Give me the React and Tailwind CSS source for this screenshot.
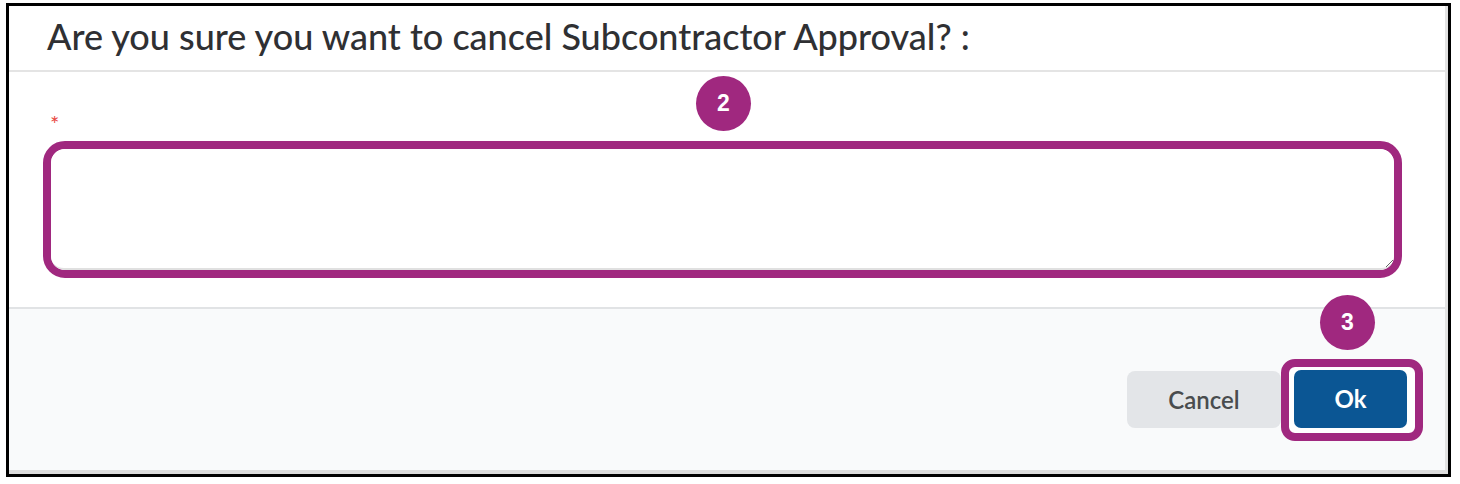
import React from 'react'

const Badge = ({ n, className }) => (
  <div
    className={
      'absolute z-10 w-[55px] h-[55px] rounded-full bg-[#a0287f] text-white flex items-center justify-center text-[23px] font-bold ' +
      className
    }
    style={{ fontFamily: '"Liberation Sans", Arial, sans-serif' }}
  >
    {n}
  </div>
)

const App = () => {
  return (
    <div className="w-[1460px] h-[484px] bg-white pt-[3px] pl-[6px]" style={{ fontFamily: 'Lato, "Open Sans", sans-serif' }}>
      <div className="w-[1445px] h-[474px] border-[3px] border-black flex flex-col">
        <div className="flex-1 flex flex-col border-r-[3px] border-[#e2e2e2]">
          {/* header */}
          <div className="h-[66px] border-b-2 border-[#e4e4e4] pl-[38px] pt-[12px]">
            <h2 className="text-[36px] leading-[36px] font-medium text-[#2f3033]">
              Are you sure you want to cancel Subcontractor Approval? :
            </h2>
          </div>

          {/* body */}
          <div className="relative h-[237px] border-b-2 border-[#e1e3e5] bg-white">
            <Badge n="2" className="left-[687px] top-[4px]" />
            <div className="pt-[41px] pl-[41px] h-[58px] text-[22px] leading-none text-[#e8463f]">*</div>
            <div className="mt-[11px] ml-[34px] w-[1359px] h-[137px] border-8 border-[#a0287f] rounded-[22px] overflow-hidden">
              <textarea className="block w-full h-full rounded-[13px] bg-white border-b-2 border-[#e0e0e0] outline-none" />
            </div>
          </div>

          {/* footer */}
          <div className="relative flex-1 bg-[#f9fafb] flex justify-end items-start pr-[22px]">
            <Badge n="3" className="left-[1311px] top-[-14px]" />
            <button
              type="button"
              className="mt-[62px] w-[154px] h-[57px] rounded-[8px] bg-[#e3e5e8] text-[#494c4e] text-[24px] font-semibold"
            >
              Cancel
            </button>
            <div className="mt-[50px] w-[142px] h-[82px] border-8 border-[#a0287f] rounded-[14px] bg-white pl-[5px] pt-[3px]">
              <button
                type="button"
                className="w-[113px] h-[58px] rounded-[7px] bg-[#0b5694] text-white text-[24px] font-bold"
              >
                Ok
              </button>
            </div>
          </div>
        </div>
        <div className="h-[4px] bg-[#dcdcdc]" />
      </div>
    </div>
  )
}

export default App
